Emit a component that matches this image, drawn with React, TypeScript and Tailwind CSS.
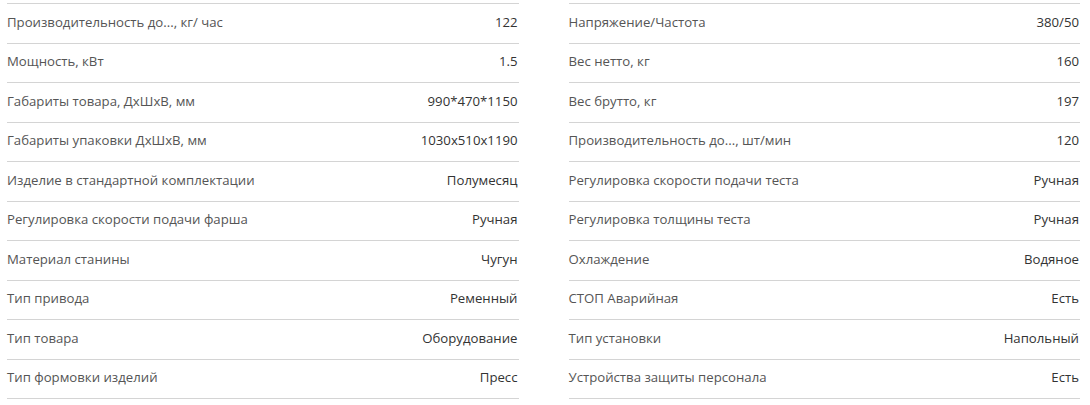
import React from "react";

const left: [string, string][] = [
  ["Производительность до..., кг/ час", "122"],
  ["Мощность, кВт", "1.5"],
  ["Габариты товара, ДхШхВ, мм", "990*470*1150"],
  ["Габариты упаковки ДхШхВ, мм", "1030x510x1190"],
  ["Изделие в стандартной комплектации", "Полумесяц"],
  ["Регулировка скорости подачи фарша", "Ручная"],
  ["Материал станины", "Чугун"],
  ["Тип привода", "Ременный"],
  ["Тип товара", "Оборудование"],
  ["Тип формовки изделий", "Пресс"],
];

const right: [string, string][] = [
  ["Напряжение/Частота", "380/50"],
  ["Вес нетто, кг", "160"],
  ["Вес брутто, кг", "197"],
  ["Производительность до..., шт/мин", "120"],
  ["Регулировка скорости подачи теста", "Ручная"],
  ["Регулировка толщины теста", "Ручная"],
  ["Охлаждение", "Водяное"],
  ["СТОП Аварийная", "Есть"],
  ["Тип установки", "Напольный"],
  ["Устройства защиты персонала", "Есть"],
];

function Column({ rows }: { rows: [string, string][] }) {
  return (
    <div className="flex flex-col border-t border-[#d4d4d4]">
      {rows.map(([k, v]) => (
        <div
          key={k}
          className="flex h-[39.5px] items-center justify-between border-b border-[#d4d4d4] pr-px pb-px"
        >
          <span className="text-[#555555]">{k}</span>
          <span className="text-[#333333]">{v}</span>
        </div>
      ))}
    </div>
  );
}

export default function App() {
  return (
    <div
      className="grid w-[1090px] grid-cols-2 gap-[50px] bg-white pl-[7px] pr-[10px] pt-[3px] text-[13.2px]"
      style={{ fontFamily: '"Open Sans", sans-serif' }}
    >
      <Column rows={left} />
      <Column rows={right} />
    </div>
  );
}
